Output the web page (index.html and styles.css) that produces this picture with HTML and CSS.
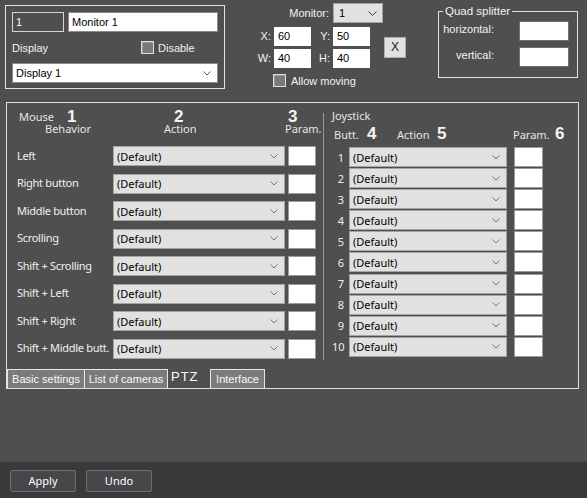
FILE: index.html
```html
<!DOCTYPE html>
<html>
<head>
<meta charset="utf-8">
<link rel="stylesheet" href="styles.css">
</head>
<body>
<div class="app">
  <div class="main">
    <div class="top">
      <div class="mon-box">
        <div class="row1">
          <div class="field id">1</div>
          <div class="field name">Monitor 1</div>
        </div>
        <div class="row2">
          <span class="disp">Display</span>
          <span class="check"></span>
          <span>Disable</span>
        </div>
        <div class="select white wide"><span>Display 1</span><svg class="chev" width="8" height="5" viewBox="0 0 8 5"><polyline points="0.5,0.5 4,4 7.5,0.5" fill="none" stroke="#555" stroke-width="1"/></svg></div>
      </div>

      <div class="coords">
        <div class="mon-row">
          <span class="mon-lbl">Monitor:</span>
          <div class="select mon-sel"><span>1</span><svg class="chev" width="9" height="5" viewBox="0 0 9 5"><polyline points="0.5,0.5 4.5,4.5 8.5,0.5" fill="none" stroke="#444" stroke-width="1"/></svg></div>
        </div>
        <div class="xy">
          <span class="cl">X:</span><div class="field num">60</div>
          <span class="cl">Y:</span><div class="field num">50</div>
          <div class="xbtn">X</div>
          <span class="cl">W:</span><div class="field num">40</div>
          <span class="cl">H:</span><div class="field num">40</div>
        </div>
        <div class="allow"><span class="check"></span><span>Allow moving</span></div>
      </div>

      <fieldset class="quad">
        <legend>Quad splitter</legend>
        <div class="quad-grid">
          <span class="ql">horizontal:</span><div class="field qf"></div>
          <span class="ql">vertical:</span><div class="field qf"></div>
        </div>
      </fieldset>
    </div>

    <div class="panel">
      <div class="panel-body">
        <div class="mouse">
          <div class="mhead">
            <div class="hline l1">
              <div class="c1"><span class="mt">Mouse</span><span class="big">1</span></div>
              <div class="c2"><span class="big">2</span></div>
              <div class="c3"></div>
              <div class="c4"><span class="big">3</span></div>
            </div>
            <div class="hline l2">
              <div class="c1"><span class="beh">Behavior</span></div>
              <div class="c2"><span class="act">Action</span></div>
              <div class="c3"></div>
              <div class="c4"><span class="par">Param.</span></div>
            </div>
          </div>
          <div class="mrows">
            <div class="mrow"><span class="ml">Left</span><div class="select msel"><span>(Default)</span><svg class="chev" width="8" height="5" viewBox="0 0 8 5"><polyline points="0.5,0.5 4,4 7.5,0.5" fill="none" stroke="#777" stroke-width="1"/></svg></div><div class="pbox"></div></div>
            <div class="mrow"><span class="ml">Right button</span><div class="select msel"><span>(Default)</span><svg class="chev" width="8" height="5" viewBox="0 0 8 5"><polyline points="0.5,0.5 4,4 7.5,0.5" fill="none" stroke="#777" stroke-width="1"/></svg></div><div class="pbox"></div></div>
            <div class="mrow"><span class="ml">Middle button</span><div class="select msel"><span>(Default)</span><svg class="chev" width="8" height="5" viewBox="0 0 8 5"><polyline points="0.5,0.5 4,4 7.5,0.5" fill="none" stroke="#777" stroke-width="1"/></svg></div><div class="pbox"></div></div>
            <div class="mrow"><span class="ml">Scrolling</span><div class="select msel"><span>(Default)</span><svg class="chev" width="8" height="5" viewBox="0 0 8 5"><polyline points="0.5,0.5 4,4 7.5,0.5" fill="none" stroke="#777" stroke-width="1"/></svg></div><div class="pbox"></div></div>
            <div class="mrow"><span class="ml">Shift + Scrolling</span><div class="select msel"><span>(Default)</span><svg class="chev" width="8" height="5" viewBox="0 0 8 5"><polyline points="0.5,0.5 4,4 7.5,0.5" fill="none" stroke="#777" stroke-width="1"/></svg></div><div class="pbox"></div></div>
            <div class="mrow"><span class="ml">Shift + Left</span><div class="select msel"><span>(Default)</span><svg class="chev" width="8" height="5" viewBox="0 0 8 5"><polyline points="0.5,0.5 4,4 7.5,0.5" fill="none" stroke="#777" stroke-width="1"/></svg></div><div class="pbox"></div></div>
            <div class="mrow"><span class="ml">Shift + Right</span><div class="select msel"><span>(Default)</span><svg class="chev" width="8" height="5" viewBox="0 0 8 5"><polyline points="0.5,0.5 4,4 7.5,0.5" fill="none" stroke="#777" stroke-width="1"/></svg></div><div class="pbox"></div></div>
            <div class="mrow"><span class="ml">Shift + Middle butt.</span><div class="select msel"><span>(Default)</span><svg class="chev" width="8" height="5" viewBox="0 0 8 5"><polyline points="0.5,0.5 4,4 7.5,0.5" fill="none" stroke="#777" stroke-width="1"/></svg></div><div class="pbox"></div></div>
          </div>
        </div>

        <div class="sep"></div>

        <div class="joy">
          <div class="jhead">
            <div class="jl1">Joystick</div>
            <div class="jl2">
              <span class="j-butt">Butt.</span><span class="big j4">4</span><span class="j-act">Action</span><span class="big j5">5</span><span class="j-par">Param.</span><span class="big">6</span>
            </div>
          </div>
          <div class="jrows">
            <div class="jrow"><span class="jn">1</span><div class="select jsel"><span>(Default)</span><svg class="chev" width="8" height="5" viewBox="0 0 8 5"><polyline points="0.5,0.5 4,4 7.5,0.5" fill="none" stroke="#777" stroke-width="1"/></svg></div><div class="pbox jp"></div></div>
            <div class="jrow"><span class="jn">2</span><div class="select jsel"><span>(Default)</span><svg class="chev" width="8" height="5" viewBox="0 0 8 5"><polyline points="0.5,0.5 4,4 7.5,0.5" fill="none" stroke="#777" stroke-width="1"/></svg></div><div class="pbox jp"></div></div>
            <div class="jrow"><span class="jn">3</span><div class="select jsel"><span>(Default)</span><svg class="chev" width="8" height="5" viewBox="0 0 8 5"><polyline points="0.5,0.5 4,4 7.5,0.5" fill="none" stroke="#777" stroke-width="1"/></svg></div><div class="pbox jp"></div></div>
            <div class="jrow"><span class="jn">4</span><div class="select jsel"><span>(Default)</span><svg class="chev" width="8" height="5" viewBox="0 0 8 5"><polyline points="0.5,0.5 4,4 7.5,0.5" fill="none" stroke="#777" stroke-width="1"/></svg></div><div class="pbox jp"></div></div>
            <div class="jrow"><span class="jn">5</span><div class="select jsel"><span>(Default)</span><svg class="chev" width="8" height="5" viewBox="0 0 8 5"><polyline points="0.5,0.5 4,4 7.5,0.5" fill="none" stroke="#777" stroke-width="1"/></svg></div><div class="pbox jp"></div></div>
            <div class="jrow"><span class="jn">6</span><div class="select jsel"><span>(Default)</span><svg class="chev" width="8" height="5" viewBox="0 0 8 5"><polyline points="0.5,0.5 4,4 7.5,0.5" fill="none" stroke="#777" stroke-width="1"/></svg></div><div class="pbox jp"></div></div>
            <div class="jrow"><span class="jn">7</span><div class="select jsel"><span>(Default)</span><svg class="chev" width="8" height="5" viewBox="0 0 8 5"><polyline points="0.5,0.5 4,4 7.5,0.5" fill="none" stroke="#777" stroke-width="1"/></svg></div><div class="pbox jp"></div></div>
            <div class="jrow"><span class="jn">8</span><div class="select jsel"><span>(Default)</span><svg class="chev" width="8" height="5" viewBox="0 0 8 5"><polyline points="0.5,0.5 4,4 7.5,0.5" fill="none" stroke="#777" stroke-width="1"/></svg></div><div class="pbox jp"></div></div>
            <div class="jrow"><span class="jn">9</span><div class="select jsel"><span>(Default)</span><svg class="chev" width="8" height="5" viewBox="0 0 8 5"><polyline points="0.5,0.5 4,4 7.5,0.5" fill="none" stroke="#777" stroke-width="1"/></svg></div><div class="pbox jp"></div></div>
            <div class="jrow"><span class="jn">10</span><div class="select jsel"><span>(Default)</span><svg class="chev" width="8" height="5" viewBox="0 0 8 5"><polyline points="0.5,0.5 4,4 7.5,0.5" fill="none" stroke="#777" stroke-width="1"/></svg></div><div class="pbox jp"></div></div>
          </div>
        </div>
      </div>

      <div class="tabs">
        <div class="tab t1">Basic settings</div>
        <div class="tab t2">List of cameras</div>
        <div class="tab t3 active">PTZ</div>
        <div class="tab t4">Interface</div>
      </div>
    </div>
  </div>

  <div class="footer">
    <div class="btn">Apply</div>
    <div class="btn">Undo</div>
  </div>
</div>
</body>
</html>
```

FILE: styles.css
```css
* { box-sizing: border-box; }

body {
  margin: 0;
  background: #4f4f4f;
  font-family: "Noto Sans", "Open Sans", sans-serif;
  font-size: 11px;
  color: #f0f0f0;
}

.app {
  width: 587px;
  height: 498px;
  display: flex;
  flex-direction: column;
  overflow: hidden;
}

.main { flex: 1; }

/* ---------- top area ---------- */
.top {
  display: flex;
  align-items: flex-start;
  height: 102px;
  font-family: "Liberation Sans", Arial, sans-serif;
  font-size: 11px;
  color: #f2f2f2;
}

.mon-box {
  margin: 5px 0 0 5px;
  width: 220px;
  height: 84px;
  border: 1px solid #e4e4e4;
  padding: 6px;
}

.row1 { display: flex; gap: 4px; }

.field {
  height: 20px;
  line-height: 18px;
  padding-left: 3px;
  border: 1px solid #8a8a8a;
  background: #fff;
  color: #000;
  font-family: "Liberation Sans", Arial, sans-serif;
  font-size: 11px;
}

.field.id {
  width: 52px;
  background: #4f4f4f;
  border-color: #d6d6d6;
  color: #fff;
}

.field.name { width: 150px; }

.row2 {
  display: flex;
  align-items: center;
  height: 31px;
}

.disp { width: 129px; }

.check {
  width: 13px;
  height: 13px;
  border: 1px solid #dedede;
  background: #7a7a7a;
  box-shadow: inset 1px 1px 0 #9a9a9a;
  margin-right: 4px;
}

.select {
  display: flex;
  align-items: center;
  justify-content: space-between;
  height: 20px;
  border: 1px solid #a3a3a3;
  background: #e1e1e1;
  color: #000;
  padding: 0 6px 0 3px;
}

.select.white { background: #fff; border-color: #8a8a8a; }
.wide { width: 206px; }
.chev { flex: none; }

/* coords */
.coords {
  margin: 3px 0 0 30px;
  width: 151px;
}

.mon-row { display: flex; align-items: center; }
.mon-lbl { width: 74px; text-align: right; margin-right: 4px; }
.mon-sel { width: 50px; padding: 0 5px 0 5px; font-family: "Liberation Sans", Arial, sans-serif; font-size: 11px; }

.xy {
  display: grid;
  grid-template-columns: 19px 37px 22px 37px 36px;
  grid-template-rows: 19px 19px;
  row-gap: 3px;
  margin-top: 4px;
}

.cl {
  text-align: right;
  padding-right: 3px;
  line-height: 19px;
}

.field.num { height: 19px; line-height: 17px; border-color: #fff; }

.xbtn {
  grid-column: 5;
  grid-row: 1 / span 2;
  align-self: center;
  justify-self: end;
  width: 22px;
  height: 21px;
  border: 1px solid #adadad;
  background: #e1e1e1;
  color: #222;
  text-align: center;
  line-height: 19px;
  font-size: 12px;
}

.allow {
  display: flex;
  align-items: center;
  margin-top: 6px;
  padding-left: 18px;
}

.allow .check { margin-right: 5px; }

/* quad splitter */
.quad {
  margin: 4px 0 0 32px;
  width: 140px;
  border: 1px solid #e4e4e4;
  padding: 3px 8px 10px 4px;
  min-width: 0;
}

.quad legend {
  padding: 0 2px;
  line-height: 14px;
  font-size: 11.5px;
}

.quad-grid {
  display: grid;
  grid-template-columns: 51px 50px;
  column-gap: 25px;
  row-gap: 6px;
  align-items: center;
}

.ql { text-align: right; padding-bottom: 4px; }
.field.qf { width: 50px; border-color: #707070; }

/* ---------- panel ---------- */
.panel {
  margin-left: 6px;
  width: 573px;
  height: 287px;
  border: 1px solid #dedede;
  display: flex;
  flex-direction: column;
}

.panel-body { flex: 1; display: flex; }

.mouse { margin-left: 10px; width: 299px; }

.mhead { height: 43px; padding-top: 7px; }

.hline { display: flex; }
.l1 { height: 13px; line-height: 13px; }
.l2 { height: 11px; line-height: 11px; }
.hline .c1 { width: 96px; }
.hline .c2 { width: 172px; }
.hline .c3 { width: 3px; }
.hline .c4 { width: 28px; }

.l1 .c1 { display: flex; padding-left: 2px; }
.mt { width: 48px; color: #e6e6e6; }

.big {
  display: block;
  height: 13px;
  font-family: "Liberation Sans", Arial, sans-serif;
  font-weight: bold;
  font-size: 17px;
  line-height: 13px;
  color: #f4f4f4;
}

.l1 .c2 { padding-left: 61px; }
.l2 .c1 { padding-left: 28px; }
.l2 .c2 { padding-left: 51px; }
.beh, .act, .par { display: block; color: #e6e6e6; }
.par { margin-left: -3px; white-space: nowrap; }

.mrows { display: flex; flex-direction: column; gap: 7.5px; }
.mrow { display: flex; align-items: center; height: 20px; }
.ml {
  width: 96px;
  white-space: nowrap;
  letter-spacing: -0.3px;
  padding-bottom: 2px;
}
.msel { width: 172px; }

.pbox {
  width: 28px;
  height: 20px;
  margin-left: 3px;
  background: #fff;
  border: 1px solid #9a9a9a;
}

.sep {
  width: 1px;
  margin: 10px 0 0 7px;
  height: 247px;
  background: #9a9a9a;
}

.joy { margin-left: 8px; }

.jhead { height: 44px; padding-top: 6px; }
.jl1 { line-height: 13px; color: #e6e6e6; }
.jl2 {
  display: flex;
  align-items: baseline;
  margin-top: 5px;
  padding-left: 2px;
  line-height: 13px;
  color: #e6e6e6;
}

.j-butt { width: 33px; }
.j4 { width: 30px; }
.j-act { width: 40px; }
.j5 { width: 76px; }
.j-par { width: 42px; }

.jrows { display: flex; flex-direction: column; gap: 1.1px; }
.jrow { display: flex; align-items: center; height: 20px; }
.jn { width: 17px; text-align: right; padding-right: 5px; }
.jsel { width: 158px; }
.pbox.jp { width: 29px; margin-left: 7px; }

/* tabs */
.tabs {
  display: flex;
  align-items: flex-end;
  height: 19px;
  font-family: "Liberation Sans", Arial, sans-serif;
  font-size: 11px;
}

.tab {
  height: 19px;
  line-height: 18px;
  text-align: center;
  border: 1px solid #e6e6e6;
  border-bottom: 0;
  background: #7b7b7b;
  color: #fafafa;
  white-space: nowrap;
}

.t1 { width: 78px; }
.t2 { width: 84px; margin-left: -1px; }
.t3 { width: 42px; }
.t4 { width: 55px; }

.tab.active {
  background: transparent;
  border: 0;
  line-height: 16px;
  font-size: 13px;
  letter-spacing: 1px;
  text-align: left;
  padding-left: 3px;
}

/* footer */
.footer {
  height: 36px;
  background: #3a393a;
  display: flex;
  gap: 10px;
  padding: 8px 0 0 10px;
}

.btn {
  width: 66px;
  height: 22px;
  border: 1px solid #6f6e73;
  border-radius: 2px;
  background: #47464a;
  color: #fff;
  text-align: center;
  line-height: 20px;
  font-size: 11px;
}
```
